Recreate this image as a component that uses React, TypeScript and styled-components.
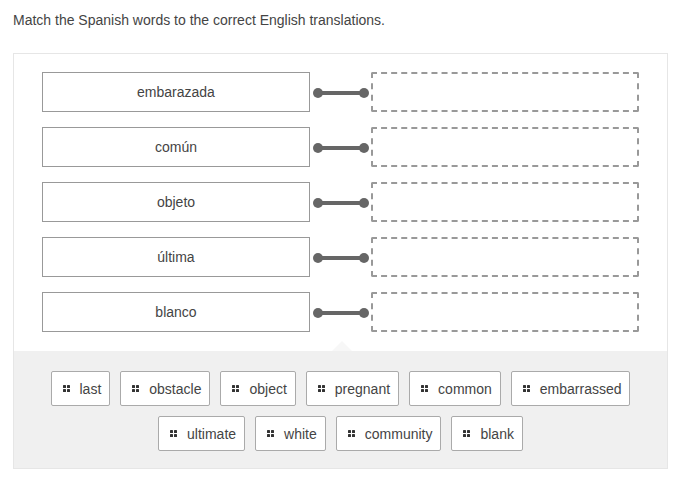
import React from 'react'
import styled, { createGlobalStyle } from 'styled-components'

const GlobalStyle = createGlobalStyle`
  body {
    margin: 0;
    background: #fff;
    font-family: Arial, 'Liberation Sans', Helvetica, sans-serif;
    color: #333;
  }
`

const Page = styled.div`
  padding: 10px 16px 0 13px;
`

const Title = styled.p`
  margin: 0 0 23px;
  font-size: 14px;
  line-height: 20px;
  color: #444;
`

const Panel = styled.div`
  border: 1px solid #e6e6e6;
  box-sizing: border-box;
  width: 655px;
`

const Pairs = styled.div`
  display: flex;
  flex-direction: column;
  gap: 15px;
  padding: 18px 28px 19px 28px;
`

const Row = styled.div`
  display: flex;
  align-items: center;
  height: 40px;
`

const Prompt = styled.div`
  width: 268px;
  height: 40px;
  box-sizing: border-box;
  border: 1px solid #999;
  display: flex;
  align-items: center;
  justify-content: center;
  font-size: 14px;
  color: #444;
`

const Connector = styled.svg`
  width: 61px;
  height: 40px;
  flex-shrink: 0;
`

const Drop = styled.div`
  width: 268px;
  height: 40px;
  box-sizing: border-box;
  border: 2px dashed #999;
  border-radius: 2px;
`

const Bank = styled.div`
  position: relative;
  background: #f0f0f0;
  padding: 20px 16px 17px;
  display: flex;
  flex-wrap: wrap;
  justify-content: center;
  gap: 10px 10px;
`

const Notch = styled.div`
  position: absolute;
  top: -10px;
  left: 318px;
  width: 0;
  height: 0;
  border-left: 10px solid transparent;
  border-right: 10px solid transparent;
  border-bottom: 10px solid #f7f7f7;
`

const Chip = styled.div`
  height: 35px;
  box-sizing: border-box;
  background: #fff;
  border: 1px solid #aaa;
  border-radius: 2px;
  padding: 0 8px 0 11px;
  display: flex;
  align-items: center;
  gap: 10px;
  font-size: 14px;
  color: #444;
`

const Handle = styled.svg`
  width: 7px;
  height: 7px;
  flex-shrink: 0;
`

const prompts = ['embarazada', 'común', 'objeto', 'última', 'blanco']
const options = [
  'last',
  'obstacle',
  'object',
  'pregnant',
  'common',
  'embarrassed',
  'ultimate',
  'white',
  'community',
  'blank',
]

const Grip = () => (
  <Handle viewBox='0 0 7 7'>
    <rect x='0' y='0' width='3' height='3' rx='0.6' fill='#333' />
    <rect x='4' y='0' width='3' height='3' rx='0.6' fill='#333' />
    <rect x='0' y='4' width='3' height='3' rx='0.6' fill='#333' />
    <rect x='4' y='4' width='3' height='3' rx='0.6' fill='#333' />
  </Handle>
)

const App = () => (
  <Page>
    <GlobalStyle />
    <Title>Match the Spanish words to the correct English translations.</Title>
    <Panel>
      <Pairs>
        {prompts.map((word) => (
          <Row key={word}>
            <Prompt>{word}</Prompt>
            <Connector viewBox='0 0 61 40'>
              <line x1='8' y1='21' x2='54' y2='21' stroke='#666' strokeWidth='4' />
              <circle cx='8' cy='21' r='5' fill='#666' />
              <circle cx='54' cy='21' r='5' fill='#666' />
            </Connector>
            <Drop />
          </Row>
        ))}
      </Pairs>
      <Bank>
        <Notch />
        {options.map((opt) => (
          <Chip key={opt}>
            <Grip />
            {opt}
          </Chip>
        ))}
      </Bank>
    </Panel>
  </Page>
)

export default App
